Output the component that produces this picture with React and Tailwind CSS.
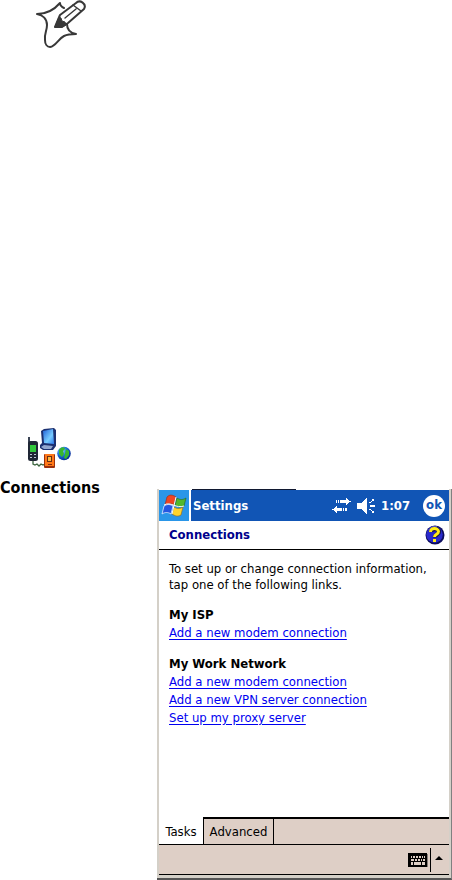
const WORK_LINKS = [
  'Add a new modem connection',
  'Add a new VPN server connection',
  'Set up my proxy server',
];

function NoteIcon() {
  return (
    <svg className="block h-12 w-[52px]" viewBox="0 0 52 48" fill="none" stroke="#383838" strokeWidth="2" strokeLinejoin="round" strokeLinecap="round">
      <path d="M28 8C26 7 24 5 24 3C18 10 10 14 1 14C7 15 11 19 11 25C11 31 8 34 9 40C9 44 11 47 14 47C20 46 22 39 28 36C32 34 35 34 40 34C34 33 31 30 31 24" />
      <path d="m19 27 5-12L40 3c4-4 11 1 8 6L32 23l-6 4Z" fill="white" />
      <path d="m37 5 8 6M29 18 40 9" strokeWidth="1.4" />
      <path d="m19 27 4-10 2 1 1 3 3 1 1 3-4 2Z" fill="#383838" strokeWidth="1" />
    </svg>
  );
}

function ConnectionsIcon() {
  return (
    <svg className="block h-11 w-12" viewBox="0 0 48 44">
      <defs>
        <linearGradient id="screen" x1="0" y1="0" x2="1" y2="1">
          <stop offset="0" stopColor="#1e5fd8" />
          <stop offset="0.6" stopColor="#78ccff" />
          <stop offset="1" stopColor="#2d7bed" />
        </linearGradient>
        <radialGradient id="globe" cx="0.35" cy="0.3" r="0.7">
          <stop offset="0" stopColor="#9ad8ff" />
          <stop offset="0.5" stopColor="#1b75dc" />
          <stop offset="1" stopColor="#082e9b" />
        </radialGradient>
      </defs>
      <path d="m17 3 3-2 10-1 2 2v16l-3 4H19l-3-2v-3l2-2Z" fill="#1c3070" />
      <path d="m19 3 10-2 1 15-10-1Z" fill="url(#screen)" />
      <path d="m17 19 3-2 9 1-2 3h-7Z" fill="#93a7cf" />
      <path d="M4 9h2v7H4Z" fill="#3a4354" />
      <rect x="4" y="13" width="10" height="20" rx="2.5" fill="#202736" />
      <rect x="6" y="17" width="6" height="7" fill="#31c83c" />
      <path d="M6 26h2v1H6zm4 0h2v1h-2zM6 29h2v1H6zm4 0h2v1h-2z" fill="#bdc6d0" />
      <path d="M9 33v3l2 1 2-1 2 2 2-2 2 1 2-1" fill="none" stroke="#3d6640" strokeWidth="1.3" />
      <rect x="20" y="26" width="11" height="14" rx="1" fill="#9b300c" />
      <rect x="21" y="26" width="9" height="12" fill="#ff7818" />
      <rect x="23" y="28" width="5" height="6" fill="#682d16" />
      <path d="M24 29h3v4h-3z" fill="#ffb840" />
      <path d="M24 36h4v1h-4z" fill="#842d0e" />
      <circle cx="40" cy="25.5" r="6.8" fill="url(#globe)" />
      <path d="M35 22c2-4 6-3 6-1l-2 2 1 3-2 3-3-3Zm7-1 3 2v4l-3 4-2-1 1-4Z" fill="#38b62d" />
    </svg>
  );
}

function StartIcon() {
  return (
    <svg className="h-6 w-[26px]" viewBox="0 0 26 24">
      <path d="M6 3c3-3 6-2 9 0l-2 8c-3-2-6-2-9 0Z" fill="#ed4522" stroke="#963024" strokeWidth=".7" />
      <path d="M16 4c3 2 6 2 9 0l-2 8c-3 2-6 1-9-1Z" fill="#51b82c" stroke="#286b29" strokeWidth=".7" />
      <path d="M3 12c3-2 6-2 9 0l-2 8c-3-2-6-2-9 0Z" fill="#2457e1" stroke="#e6efff" strokeWidth=".8" />
      <path d="M13 13c3 2 6 2 9 0l-2 8c-3 2-6 1-9-1Z" fill="#ffd42b" stroke="#946f22" strokeWidth=".7" />
      <path d="m15 3-4 17M3 11c7-4 12 4 20 1" fill="none" stroke="white" strokeWidth="1" />
    </svg>
  );
}

function SyncIcon() {
  return (
    <svg className="h-4 w-[19px]" viewBox="0 0 19 16" fill="white" shapeRendering="crispEdges">
      <path d="M4 2h1v3H4zm2 0h1v3H6zm2 0h6V0h1v1h1v1h1v1h2v1h-2v1h-1v1h-1v1h-1V5H8z" />
      <path d="M0 11h2v-1h1V9h1V8h1v2h5v3H5v2H4v-1H3v-1H2v-1H0zm11-1h1v3h-1zm2 0h2v3h-2z" />
    </svg>
  );
}

function SpeakerIcon() {
  return (
    <svg className="h-[18px] w-[18px]" viewBox="0 0 18 18" fill="white" shapeRendering="crispEdges">
      <path d="M0 6h4l6-5v16l-6-5H0z" />
      <path d="M13 8h5v2h-5zM12 5h2v1h-2zm2-1h1v1h-1zm1-2h2v2h-2zM12 12h2v1h-2zm2 1h1v1h-1zm1 1h2v2h-2z" />
    </svg>
  );
}

function HelpIcon() {
  return (
    <svg className="h-5 w-5" viewBox="0 0 20 20">
      <circle cx="10" cy="10" r="9.5" fill="#0c0c5c" />
      <circle cx="9.5" cy="9.5" r="8.3" fill="#2a2acb" />
      <path d="M4 5c2-3 5-4 8-3" fill="none" stroke="#7777ea" strokeWidth="1" />
      <path d="M6 7c0-4 8-4 8-.5 0 3-4 2.5-4 6" fill="none" stroke="#151547" strokeWidth="4.4" />
      <path d="M5.5 7c0-5 8-4 8-.5 0 3-4 2.5-4 5.5" fill="none" stroke="#ffed18" strokeWidth="3" />
      <path d="M8 14h3v3H8z" fill="#ffed18" />
    </svg>
  );
}

function KeyboardIcon() {
  return (
    <svg className="h-3.5 w-5" viewBox="0 0 20 14" shapeRendering="crispEdges">
      <path d="M0 0h19v14H0z" fill="black" />
      <path d="M19 1h1v13h-1z" fill="#857d78" />
      <path d="M3 3h1v2H3zm2 0h2v2H5zm3 0h2v2H8zm3 0h2v2h-2zm3 0h1v2h-1zm2 0h1v2h-1zM3 6h3v2H3zm4 0h2v2H7zm3 0h2v2h-2zm3 0h1v2h-1zm2 0h2v2h-2zM3 9h2v3H3zm3 0h7v3H6zm8 0h3v3h-3z" fill="#decfc6" />
    </svg>
  );
}

function TaskLink({ children }) {
  return (
    <a href="#" className="block w-fit text-[#0000f0] underline underline-offset-2">
      {children}
    </a>
  );
}

export default function App() {
  return (
    <div className="min-h-screen bg-white font-['DejaVu_Sans_Condensed','DejaVu_Sans',sans-serif] text-black">
      <header className="h-[428px] pl-9">
        <NoteIcon />
      </header>

      <main className="flex items-start">
        <aside className="w-[157px] shrink-0">
          <div className="pl-6">
            <ConnectionsIcon />
          </div>
          <p className="mt-1.5 text-base leading-5 font-bold">Connections</p>
        </aside>

        <section className="mt-[61px] min-w-0 flex-1 border-r border-b-2 border-r-[#808080] border-b-[#555] text-[13px]">
          <div className="border-x-2 border-b-[3px] border-[#d4d0c8]">
            <div className="flex h-px">
              <div className="ml-[33px] w-[104px] bg-[#101830]" />
            </div>
            <div className="flex h-[31px] items-stretch bg-[#1155b5] text-white">
              <button type="button" aria-label="Start" className="flex w-8 shrink-0 items-center justify-center border-r-2 border-white bg-[#2a96e8]">
                <StartIcon />
              </button>
              <h1 className="flex flex-1 items-center pl-0.5 font-bold">Settings</h1>
              <div className="flex items-center gap-1.5 pr-1">
                <SyncIcon />
                <SpeakerIcon />
                <span className="w-9 font-bold">1:07</span>
                <button type="button" className="flex size-[22px] items-center justify-center rounded-full bg-white pb-0.5 font-bold text-[#1155b5]">
                  ok
                </button>
              </div>
            </div>

            <div className="flex h-[29px] items-center justify-between border-b border-black pr-1 pl-2.5">
              <h2 className="font-bold text-[#00008c]">Connections</h2>
              <button type="button" aria-label="Help">
                <HelpIcon />
              </button>
            </div>

            <div className="h-[267px] px-2.5 pt-[11px] leading-[18px]">
              <p className="leading-4 whitespace-nowrap">
                To set up or change connection information,
                <br />
                tap one of the following links.
              </p>
              <h3 className="mt-[13px] font-bold">My ISP</h3>
              <TaskLink>Add a new modem connection</TaskLink>
              <h3 className="mt-[13px] font-bold">My Work Network</h3>
              {WORK_LINKS.map((label) => (
                <TaskLink key={label}>{label}</TaskLink>
              ))}
            </div>

            <div className="flex h-7 border-b border-black bg-[#decfc6]">
              <button type="button" className="w-11 bg-white pt-0.5">Tasks</button>
              <button type="button" className="w-[71px] border-x border-t-2 border-black">Advanced</button>
              <div className="flex-1 border-t-2 border-black" />
            </div>

            <div className="flex h-[30px] items-center justify-end border-b border-black bg-[#decfc6]">
              <button type="button" aria-label="Keyboard">
                <KeyboardIcon />
              </button>
              <div className="ml-0.5 h-6 w-px bg-black" />
              <button type="button" aria-label="Input options" className="w-[18px] pb-1 pl-1">
                <svg className="h-1 w-2" viewBox="0 0 8 4">
                  <path d="M0 4 4 0l4 4Z" />
                </svg>
              </button>
            </div>
          </div>
        </section>
      </main>
    </div>
  );
}
